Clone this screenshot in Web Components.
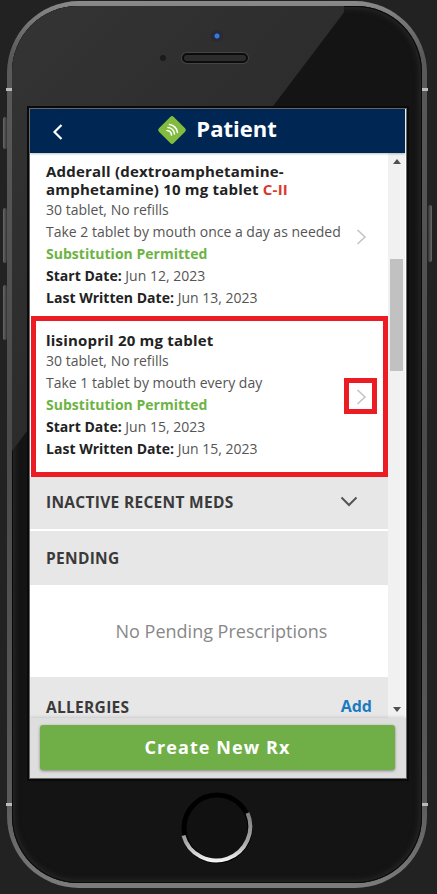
<!DOCTYPE html>
<html><head><meta charset="utf-8">
<style>
html,body{margin:0;padding:0;width:437px;height:894px;overflow:hidden;background:#222;font-family:"Open Sans",sans-serif}
med-card b{font-weight:700;color:#222;letter-spacing:.02px}
</style></head><body>
<template id="t-frame"><style>
:host{display:block;position:relative;box-sizing:border-box;width:420px;height:887px;margin:1px 0 0 7px;border-radius:72px;padding:5px;background:linear-gradient(180deg,#8a8a8a 0,#5a5a5a 6%,#4a4a4a 50%,#5a5a5a 90%,#7c7c7c 100%)}
.body{position:relative;box-sizing:border-box;height:100%;border-radius:66px;background:#141414;box-shadow:inset 0 0 0 1px #0a0a0a,inset 0 0 6px 2px #2c2c2c;display:flex;flex-direction:column;align-items:center;overflow:hidden}
.glare{position:absolute;inset:0;background:linear-gradient(135deg,#343434 0,#2a2a2a 40%,#262626 100%);clip-path:polygon(0 0,332px 0,332px 6px,330px 9px,0 445px)}
.top{position:relative;height:103px;width:100%;display:flex;flex-direction:column;align-items:center;padding-top:24px;box-sizing:border-box}
.cam{width:12px;height:12px;border-radius:50%;background:radial-gradient(circle,#3d78d8 0 2px,#1e2a44 3px,#2c2c30 5px,#252525 6px)}
.row{display:flex;align-items:center;margin-top:11px;margin-left:-26px;gap:16px}
.sensor{width:6px;height:6px;border-radius:50%;background:#1b1b1b}
.spk{width:66px;height:10px;box-sizing:border-box;border-radius:5px;background:#2c2c2c;border:2px solid #0c0c0c;box-shadow:0 0 0 1px #444}
.screen{position:relative;margin-left:2px;box-shadow:0 0 0 1px #666,0 0 0 3px #0a0a0a;line-height:0}
.btn{position:absolute;background:linear-gradient(90deg,#6a6a6a,#333);border-radius:2px;width:4px}
.band{position:absolute;height:3px;width:6px;background:#bbb}
</style>
<div class="btn" style="left:-4px;top:116px;height:32px"></div>
<div class="btn" style="left:-4px;top:207px;height:55px"></div>
<div class="btn" style="left:-4px;top:284px;height:55px"></div>
<div class="btn" style="right:-5px;top:204px;height:57px;background:linear-gradient(90deg,#333,#6a6a6a)"></div>
<div class="band" style="left:-1px;top:87px"></div><div class="band" style="right:-1px;top:87px"></div>
<div class="band" style="left:-1px;top:802px"></div><div class="band" style="right:-1px;top:802px"></div>
<div class="body"><div class="glare"></div>
<div class="top"><div class="cam"></div><div class="row"><div class="sensor"></div><div class="spk"></div></div></div>
<div class="screen"><slot></slot></div>
<slot name="home"></slot>
</div></template>

<template id="t-home"><style>:host{display:block;width:72px;height:72px;margin-top:14px;line-height:0}</style>
<svg width="72" height="72" viewBox="0 0 72 72"><defs><linearGradient id="g" gradientUnits="userSpaceOnUse" x1="0" y1="15" x2="0" y2="72"><stop offset="0" stop-color="#777"/><stop offset=".6" stop-color="#a4a4a4"/><stop offset="1" stop-color="#fff"/></linearGradient></defs>
<circle cx="36" cy="36" r="33" fill="#111" stroke="#000" stroke-width="5"/>
<path d="M2.500 43.500A34 34 0 1 0 66.500 21" fill="none" stroke="url(#g)" stroke-width="4"/></svg></template>

<template id="t-screen"><style>
:host{display:flex;flex-direction:column;width:376px;height:669px;background:#fff;line-height:normal;font-family:"Open Sans",sans-serif;overflow:hidden}
.mid{position:relative;flex:1;min-height:0;display:flex}
.list{flex:1;min-width:0;overflow:hidden;background:#fff}
::slotted([slot=footer]){position:relative;z-index:2}
</style><slot name="header"></slot>
<div class="mid"><div class="list"><slot></slot></div><slot name="scroll"></slot></div>
<slot name="footer"></slot></template>

<template id="t-header"><style>
:host{display:flex;align-items:center;justify-content:center;position:relative;flex:none;height:44px;background:#002654;color:#fff;margin-right:1px;box-shadow:0 1px 2px rgba(0,0,0,.25);z-index:2}
.back{position:absolute;left:21px;top:14px;line-height:0}
.t{font-weight:700;font-size:22px;margin:0 0 6px 9px;line-height:38px}
svg{display:block}
.logo{margin:0 0 2px -1px}
</style>
<div class="back"><svg width="14" height="18" viewBox="0 0 14 18"><path d="M10.500 2 3.500 9l7 7" fill="none" stroke="#fff" stroke-width="2.2"/></svg></div>
<svg class="logo" width="30" height="30" viewBox="0 0 30 30"><rect x="4.500" y="4.500" width="21" height="21" rx="2.500" transform="rotate(45 15 15)" fill="#82bc3f"/>
<g fill="none" stroke="#fff" stroke-linecap="round"><path d="M12.500 9.500A9 9 0 0 1 20.500 17.500" stroke-width="1.600"/><path d="M11 12.500A7 7 0 0 1 17.500 19" stroke-width="1.600"/><path d="M10 15.500A5 5 0 0 1 14.500 20" stroke-width="1.600"/></g></svg>
<div class="t"><slot></slot></div></template>

<template id="t-med"><style>
:host{display:block;position:relative;box-sizing:border-box;padding:0 46px 0 16px;font-size:14px;line-height:22px;color:#555}
.title{font-weight:700;font-size:15px;line-height:18px;color:#222;letter-spacing:.2px;margin-bottom:1px}
.sub{font-weight:700;color:#6db344;letter-spacing:.02px}
.chev{position:absolute;right:21px;top:50%;margin-top:calc(-8px + var(--chev,0px));line-height:0}
</style><div class="title"><slot name="title"></slot></div>
<div><slot name="qty"></slot></div><div><slot name="sig"></slot></div>
<div class="sub"><slot name="sub"></slot></div>
<div><slot name="start"></slot></div><div><slot name="last"></slot></div>
<div class="chev"><svg width="11" height="16" viewBox="0 0 11 16"><path d="M1.500 1 9 8l-7.500 7" fill="none" stroke="#c4c4c4" stroke-width="1.600"/></svg></div>
<slot></slot></template>

<template id="t-section"><style>
:host{display:flex;align-items:center;justify-content:space-between;box-sizing:border-box;height:var(--h,52px);padding:var(--pad,0) 16px var(--padb,0);background:#e7e7e7;color:#3a3a3a;font-weight:700;font-size:15.500px;letter-spacing:.3px}
::slotted([slot=act]){color:#1a7bc0;font-weight:700;letter-spacing:0}
</style><span><slot></slot></span><slot name="act"></slot></template>

<template id="t-scroll"><style>
:host{display:flex;flex-direction:column;align-items:center;flex:none;width:17px;margin-right:1px;background:#f1f1f1;box-sizing:border-box}
.a{flex:none;height:17px;display:flex;align-items:center;justify-content:center;line-height:0}
.tr{flex:1;width:100%;display:flex;flex-direction:column;align-items:center}
.th{width:13px;height:112px;margin-top:89px;background:#c1c1c1}
</style><div class="a"><svg width="8" height="5" viewBox="0 0 8 5"><path d="M4 0 8 5H0z" fill="#505050"/></svg></div><div class="tr"><div class="th"></div></div><div class="a"><svg width="8" height="5" viewBox="0 0 8 5"><path d="M0 0H8L4 5z" fill="#505050"/></svg></div></template>

<template id="t-footer"><style>
:host{display:block;flex:none;box-sizing:border-box;height:60px;padding:7px 11px 8px 10px;background:#dedede;box-shadow:0 -1px 3px rgba(0,0,0,.12)}
button{display:block;width:100%;height:45px;border:0;border-radius:3px;background:#70af47;color:#fff;font:700 18px "Open Sans",sans-serif;letter-spacing:1.1px;box-shadow:0 1px 3px rgba(0,0,0,.4);padding:0 0 2px 0}
</style><button><slot></slot></button></template>

<template id="t-mark"><style>:host{display:block;position:absolute;box-sizing:border-box;border:5px solid #ec1c24;pointer-events:none}</style></template>

<template id="t-empty"><style>:host{display:flex;align-items:center;justify-content:center;height:92px;padding-left:25px;box-sizing:border-box;color:#888;font-size:18px;background:#fff}</style><slot></slot></template>

<phone-frame>
<app-screen>
<app-header slot="header">Patient</app-header>
<med-card style="padding-top:9px;height:163px;--chev:2px">
<span slot="title">Adderall (dextroamphetamine-<br>amphetamine) 10 mg tablet <span style="color:#d8392f">C-II</span></span>
<span slot="qty">30 tablet, No refills</span>
<span slot="sig">Take 2 tablet by mouth once a day as needed</span>
<span slot="sub">Substitution Permitted</span>
<span slot="start"><b>Start Date:</b> Jun 12, 2023</span>
<span slot="last"><b>Last Written Date:</b> Jun 13, 2023</span>
</med-card>
<med-card style="padding-top:15px;height:161px">
<span slot="title">lisinopril 20 mg tablet</span>
<span slot="qty">30 tablet, No refills</span>
<span slot="sig">Take 1 tablet by mouth every day</span>
<span slot="sub">Substitution Permitted</span>
<span slot="start"><b>Start Date:</b> Jun 15, 2023</span>
<span slot="last"><b>Last Written Date:</b> Jun 15, 2023</span>
<mark-box style="left:1px;top:0;width:357px;height:161px"></mark-box>
<mark-box style="left:314px;top:62px;width:33px;height:36px"></mark-box>
</med-card>
<section-bar style="--padb:3px">INACTIVE RECENT MEDS<svg slot="act" width="18" height="11" viewBox="0 0 18 11" style="margin-right:14px;display:block"><path d="M1.500 1.500 9 9l7.500-7.500" fill="none" stroke="#555" stroke-width="2"/></svg></section-bar>
<div style="height:2px;background:#fff"></div>
<section-bar style="--h:54px;--padb:1px">PENDING</section-bar>
<empty-note>No Pending Prescriptions</empty-note>
<section-bar style="--h:60px;align-items:flex-start;--pad:19px">ALLERGIES<span slot="act" style="font-size:16px;margin-top:-1px">Add</span></section-bar>
<scroll-bar slot="scroll"></scroll-bar>
<create-footer slot="footer">Create New Rx</create-footer>
</app-screen>
<home-button slot="home"></home-button>
</phone-frame>
<script>
for(const [n,t] of [['phone-frame','t-frame'],['home-button','t-home'],['app-screen','t-screen'],['app-header','t-header'],['med-card','t-med'],['section-bar','t-section'],['scroll-bar','t-scroll'],['create-footer','t-footer'],['mark-box','t-mark'],['empty-note','t-empty']]){
customElements.define(n,class extends HTMLElement{constructor(){super();this.attachShadow({mode:'open'}).appendChild(document.getElementById(t).content.cloneNode(true))}});
}
</script>
</body></html>
